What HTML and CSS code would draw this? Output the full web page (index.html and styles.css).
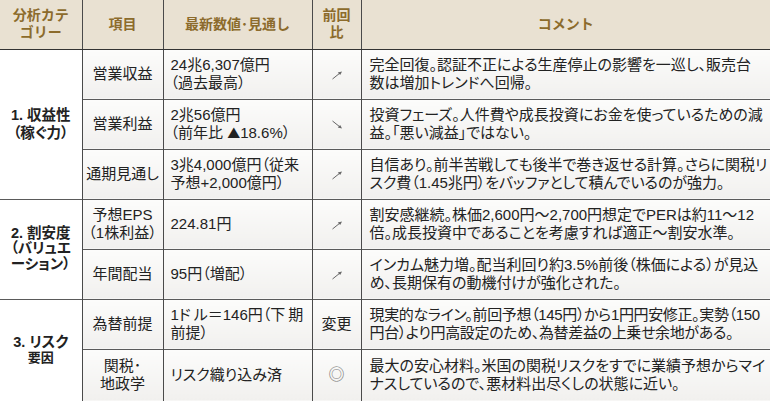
FILE: index.html
```html
<!DOCTYPE html>
<html lang="ja">
<head>
<meta charset="utf-8">
<title>分析表</title>
<link rel="stylesheet" href="styles.css">
</head>
<body>
<table class="sheet">
  <colgroup>
    <col class="c-cat"><col class="c-item"><col class="c-val"><col class="c-prev"><col class="c-com">
  </colgroup>
  <thead>
    <tr class="head">
      <th>分析カテ<br>ゴリー</th>
      <th>項目</th>
      <th>最新数値･見通し</th>
      <th>前回<br>比</th>
      <th>コメント</th>
    </tr>
  </thead>
  <tbody>
    <tr>
      <td class="cat g1" rowspan="3">1. 収益性<br>（稼ぐ力）</td>
      <td class="item">営業収益</td>
      <td class="val">24兆6,307億円<br>（過去最高）</td>
      <td class="prev"><svg class="arr" viewBox="0 0 12 10" width="12" height="10"><path d="M1.5 9 L10 2.2" stroke="#666" stroke-width="1" fill="none"/><path d="M11 1.4 L6.8 2.4 L9.2 4.9 Z" fill="#666"/></svg></td>
      <td class="com">完全回復。認証不正による生産停止の影響を一巡し、販売台<br>数は増加トレンドへ回帰。</td>
    </tr>
    <tr>
      <td class="item">営業利益</td>
      <td class="val">2兆56億円<br>（前年比 <span class="tri">▲</span>18.6%）</td>
      <td class="prev"><svg class="arr" viewBox="0 0 12 10" width="12" height="10"><path d="M1.5 1 L10 7.8" stroke="#666" stroke-width="1" fill="none"/><path d="M11 8.6 L6.8 7.6 L9.2 5.1 Z" fill="#666"/></svg></td>
      <td class="com">投資フェーズ。人件費や成長投資にお金を使っているための減<br>益。「悪い減益」ではない。</td>
    </tr>
    <tr>
      <td class="item">通期見通し</td>
      <td class="val">3兆4,000億円（従来<br>予想+2,000億円）</td>
      <td class="prev"><svg class="arr" viewBox="0 0 12 10" width="12" height="10"><path d="M1.5 9 L10 2.2" stroke="#666" stroke-width="1" fill="none"/><path d="M11 1.4 L6.8 2.4 L9.2 4.9 Z" fill="#666"/></svg></td>
      <td class="com tight">自信あり。前半苦戦しても後半で巻き返せる計算。さらに関税リ<br>スク費（1.45兆円）をバッファとして積んでいるのが強力。</td>
    </tr>
    <tr>
      <td class="cat g2" rowspan="2">2. 割安度<br>（バリュエ<br>ーション）</td>
      <td class="item">予想EPS<br>（1株利益）</td>
      <td class="val">224.81円</td>
      <td class="prev"><svg class="arr" viewBox="0 0 12 10" width="12" height="10"><path d="M1.5 9 L10 2.2" stroke="#666" stroke-width="1" fill="none"/><path d="M11 1.4 L6.8 2.4 L9.2 4.9 Z" fill="#666"/></svg></td>
      <td class="com">割安感継続。株価2,600円～2,700円想定でPERは約11～12<br>倍。成長投資中であることを考慮すれば適正～割安水準。</td>
    </tr>
    <tr>
      <td class="item">年間配当</td>
      <td class="val">95円（増配）</td>
      <td class="prev"><svg class="arr" viewBox="0 0 12 10" width="12" height="10"><path d="M1.5 9 L10 2.2" stroke="#666" stroke-width="1" fill="none"/><path d="M11 1.4 L6.8 2.4 L9.2 4.9 Z" fill="#666"/></svg></td>
      <td class="com">インカム魅力増。配当利回り約3.5%前後（株価による）が見込<br>め、長期保有の動機付けが強化された。</td>
    </tr>
    <tr>
      <td class="cat g3" rowspan="2"><span class="big">3. リスク</span><br><span class="small">要因</span></td>
      <td class="item">為替前提</td>
      <td class="val">1ド<span class="gap">ル</span>＝146円（下<span class="gap">期</span><br>前提）</td>
      <td class="prev txt">変更</td>
      <td class="com tighter">現実的なライン。前回予想（145円）から1円円安修正。実勢（150<br>円台）より円高設定のため、為替差益の上乗せ余地がある。</td>
    </tr>
    <tr class="last">
      <td class="item">関税･<br>地政学</td>
      <td class="val">リスク織り込み済</td>
      <td class="prev mark">◎</td>
      <td class="com">最大の安心材料。米国の関税リスクをすでに業績予想からマイ<br>ナスしているので、悪材料出尽くしの状態に近い。</td>
    </tr>
  </tbody>
</table>
</body>
</html>
```

FILE: styles.css
```css
html, body {
  margin: 0;
  padding: 0;
  background: #ffffff;
}

.sheet {
  width: 770px;
  border-collapse: collapse;
  table-layout: fixed;
  font-family: "Liberation Sans", "Noto Sans CJK JP", sans-serif;
  color: #222222;
}

.c-cat { width: 82px; }
.c-item { width: 81px; }
.c-val { width: 149px; }
.c-prev { width: 49px; }
.c-com { width: 409px; }

.sheet th,
.sheet td {
  padding: 0;
  border-right: 1px solid #4a4a4a;
  white-space: nowrap;
  overflow: hidden;
}

.sheet th:last-child,
.sheet td.com {
  border-right: none;
}

.head {
  height: 49px;
}

.head th {
  background: #e9e1d2;
  color: #8c6b2c;
  font-size: 14px;
  font-weight: bold;
  line-height: 17px;
  text-align: center;
  vertical-align: middle;
  border-bottom: 1px solid #333333;
}

.sheet tbody tr {
  height: 50px;
}

.sheet tbody tr.last {
  height: 52px;
}

.sheet tbody tr + tr td {
  border-top: 1px solid #5a5a5a;
}

.sheet td {
  background: linear-gradient(to bottom, #fcfcfb, #f1f0ee);
  font-size: 15px;
  line-height: 18px;
  vertical-align: middle;
  font-feature-settings: "palt";
}

.sheet td.cat {
  background: #ffffff;
  text-align: center;
  font-weight: bold;
  font-size: 14.5px;
}

.sheet td.g1 { line-height: 18px; }
.sheet td.g2 { line-height: 15.5px; }
.sheet td.g3 { line-height: 15px; }

.cat .big {
  font-size: 14.5px;
}

.cat .small {
  font-size: 13px;
}

.item {
  text-align: center;
}

.val {
  padding-left: 7px !important;
}

.tri {
  font-family: "Noto Sans CJK JP", sans-serif;
  font-size: 13px;
}

.gap {
  margin-left: 3px;
}

.prev {
  text-align: center;
}

.prev.txt {
  font-size: 15px;
}

.prev.mark {
  color: #777777;
  font-size: 16px;
}

.arr {
  display: inline-block;
  vertical-align: middle;
}

.com {
  padding-left: 8px !important;
}

.com.tight {
  letter-spacing: -0.05px;
}

.com.tighter {
  letter-spacing: -0.35px;
}
```
